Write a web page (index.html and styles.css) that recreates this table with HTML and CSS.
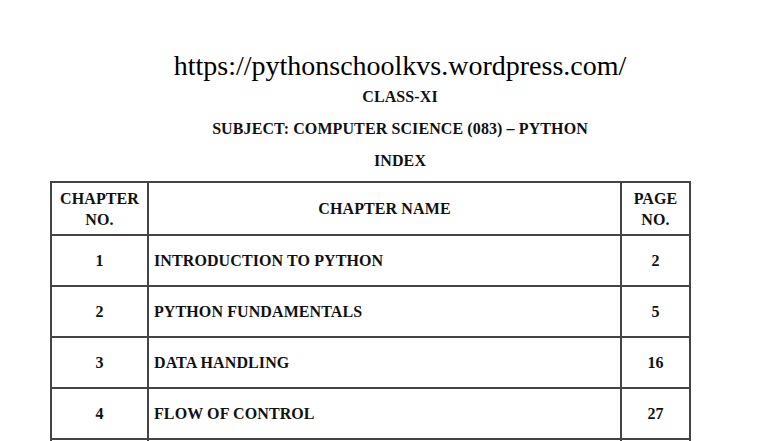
FILE: index.html
```html
<!DOCTYPE html>
<html>
<head>
<meta charset="utf-8">
<link rel="stylesheet" href="styles.css">
</head>
<body>
<div class="page">
  <header class="head">
    <div class="url">https://pythonschoolkvs.wordpress.com/</div>
    <div class="line">CLASS-XI</div>
    <div class="line">SUBJECT: COMPUTER SCIENCE (083) – PYTHON</div>
    <div class="line">INDEX</div>
  </header>
  <table class="index">
    <colgroup>
      <col class="c-no">
      <col class="c-name">
      <col class="c-page">
    </colgroup>
    <tr class="hrow">
      <th>CHAPTER<br>NO.</th>
      <th>CHAPTER NAME</th>
      <th>PAGE<br>NO.</th>
    </tr>
    <tr><td class="num">1</td><td class="name">INTRODUCTION TO PYTHON</td><td class="num">2</td></tr>
    <tr><td class="num">2</td><td class="name">PYTHON FUNDAMENTALS</td><td class="num">5</td></tr>
    <tr><td class="num">3</td><td class="name">DATA HANDLING</td><td class="num">16</td></tr>
    <tr><td class="num">4</td><td class="name">FLOW OF CONTROL</td><td class="num">27</td></tr>
    <tr class="more"><td></td><td></td><td></td></tr>
  </table>
</div>
</body>
</html>
```

FILE: styles.css
```css
html, body {
  margin: 0;
  padding: 0;
  background: #fff;
}
body {
  font-family: "Liberation Serif", "Times New Roman", serif;
  color: #111;
  overflow: hidden;
  height: 441px;
}
.page {
  padding-top: 51px;
}
.head {
  padding-left: 16px;
  text-align: center;
}
.url {
  font-size: 28px;
  line-height: 30px;
  color: #000;
}
.line {
  font-size: 16px;
  font-weight: bold;
  letter-spacing: 0.1px;
  line-height: 32px;
}
.head .line:first-of-type {
  line-height: 24px;
}
.index {
  margin-left: 50px;
  margin-top: 4px;
  width: 641px;
  border-collapse: collapse;
  table-layout: fixed;
  border: 2px solid #222;
  font-size: 16px;
  font-weight: bold;
  letter-spacing: 0.1px;
}
.c-no { width: 97px; }
.c-page { width: 69px; }
.index th, .index td {
  border: 2px solid #444;
  height: 49px;
  padding: 0 5px;
  vertical-align: middle;
  text-align: center;
  line-height: 21px;
}
.index .hrow th {
  height: 51px;
}
.index td.name {
  text-align: left;
}
```
